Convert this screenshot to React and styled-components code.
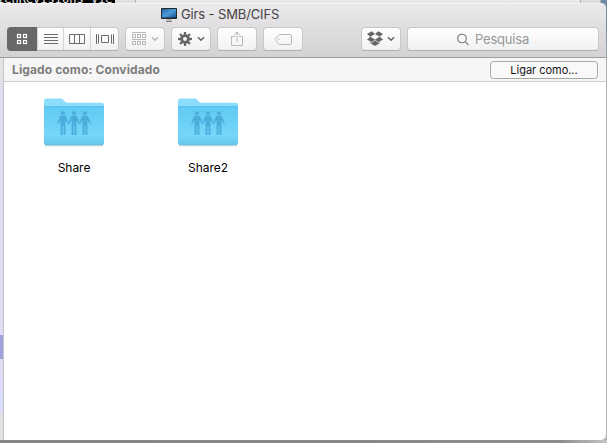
import React from 'react';
import styled, { createGlobalStyle, css } from 'styled-components';

const GlobalStyle = createGlobalStyle`
  * { box-sizing: border-box; }
  body { margin: 0; overflow: hidden; font-family: Inter, "Liberation Sans", sans-serif; }
  svg { display: block; flex: none; }
`;

const Desktop = styled.div`
  width: 607px;
  height: 443px;
  display: flex;
  flex-direction: column;
  overflow: hidden;
  background: linear-gradient(90deg, #858585 0, #8c8c8c 560px, #c4c4c4 606px);
`;
const BackStrip = styled.div`
  display: flex;
  height: 3px;
  background: #e5e5e5;
`;
const TerminalSliver = styled.div`
  width: 115px;
  height: 3px;
  overflow: hidden;
  background: #000;
  color: #e8e8e8;
  font: 12px/8px "DejaVu Sans Mono", monospace;
  white-space: nowrap;
  display: flex;
  align-items: flex-end;
  text-indent: -3px;
`;
const BackPanel = styled.div`
  width: ${(p) => p.$w}px;
  border-right: 1px solid #b5b5b5;
  background: ${(p) => p.$bg};
`;
const BackEdge = styled.div`
  flex: 1;
  background: #6d8aa7;
`;
const Frame = styled.div`
  height: 437px;
  display: flex;
  flex-direction: column;
  background: linear-gradient(180deg, #6d8aa7 0, #7894ac 30px, #b0b0b0 60px, #b5b5b5 100%);
`;
const Header = styled.header`
  width: 606px;
  height: 55px;
  flex: none;
  border-top: 1px solid #f6f5f6;
  border-bottom: 1px solid #9f9b9f;
  border-top-right-radius: 5px;
  background: linear-gradient(180deg, #ebe9eb, #d3d1d3);
`;
const TitleRow = styled.div`
  height: 23px;
  display: flex;
  align-items: center;
  padding: 0 0 2px 161px;
  gap: 3px;
`;
const Title = styled.h1`
  margin: 0;
  font-size: 13px;
  font-weight: 400;
  line-height: 19px;
  letter-spacing: -0.13px;
  color: #454345;
  white-space: nowrap;
`;
const Toolbar = styled.div`
  display: flex;
  height: 24px;
  padding-left: 7px;
`;
const raised = css`
  border: 1px solid #c8c6c8;
  border-bottom-color: #b1afb1;
  border-radius: 4px;
  background: linear-gradient(180deg, #fefefe, #f2f1f2);
`;
const Segmented = styled.div`
  ${raised}
  width: 112px;
  display: flex;
  margin-right: 6px;
`;
const Segment = styled.button`
  width: ${(p) => p.$w}px;
  padding: 0;
  border: 0;
  border-left: ${(p) => (p.$first ? 0 : 1)}px solid #d5d3d5;
  display: flex;
  align-items: center;
  justify-content: center;
  color: #6b6b6b;
  background: transparent;
  ${(p) => p.$active && css`
    color: #fff;
    background: #686868;
    margin: -1px 0 -1px -1px;
    border-radius: 4px 0 0 4px;
  `}
`;
const ToolButton = styled.button`
  ${raised}
  width: 40px;
  padding: 0;
  margin-right: ${(p) => p.$after ?? 6}px;
  display: flex;
  align-items: center;
  justify-content: center;
  gap: ${(p) => p.$gap ?? 5}px;
  color: ${(p) => (p.$dim ? '#b9b9b9' : '#666')};
`;
const Search = styled.div`
  ${raised}
  width: 192px;
  display: flex;
  align-items: center;
  padding-left: 49px;
  gap: 6px;
  font-size: 13px;
  letter-spacing: -0.2px;
  color: #999;
`;
const Body = styled.div`
  flex: 1;
  width: 606px;
  display: flex;
  min-height: 0;
`;
const SideSliver = styled.div`
  width: 4px;
  border-right: 1px solid #c5c3ca;
  background: linear-gradient(
    180deg,
    #e4e4e4 0, #e4e4e4 18px, #dcdcf3 34px, #dcdcf3 277px,
    #a2a2df 277px, #a2a2df 301px, #dcdcf3 301px, #dcdcff 350px,
    #e2e2e2 362px, #e2e2e2 100%
  );
`;
const Content = styled.main`
  flex: 1;
  background: #fff;
  border-bottom-right-radius: 5px;
`;
const StatusBar = styled.div`
  height: 24px;
  display: flex;
  align-items: center;
  justify-content: space-between;
  padding: 0 8px;
  background: #f6f6f6;
  border-bottom: 1px solid #cfcfcf;
`;
const Status = styled.span`
  font-size: 12px;
  font-weight: 700;
  letter-spacing: 0.12px;
  color: #7d7d7d;
`;
const ConnectButton = styled.button`
  width: 108px;
  height: 18px;
  padding: 0;
  border: 1px solid #a6a6a6;
  border-radius: 3.5px;
  background: #f9f9f9;
  font: 11px/14px Inter, sans-serif;
  letter-spacing: -0.03px;
  color: #161616;
`;
const Files = styled.div`
  display: flex;
  padding: 15px 0 0 3px;
`;
const FileItem = styled.figure`
  width: 134px;
  margin: 0;
  display: flex;
  flex-direction: column;
  align-items: center;
`;
const FileName = styled.figcaption`
  margin-top: 9px;
  font-size: 12px;
  line-height: 16px;
  letter-spacing: -0.02px;
  color: #000;
`;

const Chevron = () => (
  <svg width="8" height="6" viewBox="0 0 8 6" fill="none" stroke="currentColor" strokeWidth="1.6">
    <path d="M1 1.2 4 4.2 7 1.2" />
  </svg>
);
const Monitor = () => (
  <svg width="17" height="16" viewBox="0 0 17 16">
    <defs>
      <linearGradient id="screen" x1="0" y1="0" x2="1" y2="1">
        <stop offset="0" stopColor="#2463a0" />
        <stop offset=".5" stopColor="#4c9bdc" />
        <stop offset="1" stopColor="#174f8a" />
      </linearGradient>
    </defs>
    <path d="M6 12h4l1 2.5H5z" fill="#b3b3b3" />
    <path d="M5 14.5h6" stroke="#858585" />
    <rect x="0" y="1" width="16" height="11" rx=".8" fill="#222a31" />
    <rect x="1" y="2" width="14" height="8.5" fill="url(#screen)" />
  </svg>
);
const IconGrid = () => (
  <svg width="12" height="12" viewBox="0 0 12 12" fill="none" stroke="currentColor" strokeWidth="1.2">
    {[[1.5, 1.5], [7.5, 1.5], [1.5, 7.5], [7.5, 7.5]].map(([x, y]) => (
      <rect key={`${x}-${y}`} x={x} y={y} width="3" height="3" />
    ))}
  </svg>
);
const IconList = () => (
  <svg width="14" height="12" viewBox="0 0 14 12" stroke="currentColor">
    <path d="M0 1.5h14M0 4.5h14M0 7.5h14M0 10.5h14" />
  </svg>
);
const IconColumns = () => (
  <svg width="16" height="12" viewBox="0 0 16 12" fill="none" stroke="currentColor">
    <path d="M.5 1.5h15v9H.5zM5.5 1.5v9M10.5 1.5v9" />
  </svg>
);
const IconFlow = () => (
  <svg width="18" height="12" viewBox="0 0 18 12" fill="none" stroke="currentColor">
    <path d="M5.5 2.5h7v7h-7zM.5 1v10M17.5 1v10M2.5 1.5v9M15.5 1.5v9" />
  </svg>
);
const IconArrange = () => (
  <svg width="14" height="14" viewBox="0 0 14 14" fill="none" stroke="currentColor">
    <path d="M0 .5h14M0 7.5h14" />
    {[2.5, 9.5].map((y) => [0.5, 5.5, 10.5].map((x) => (
      <rect key={`${x}-${y}`} x={x} y={y} width="3" height="3" />
    )))}
  </svg>
);
const IconGear = () => (
  <svg width="14" height="14" viewBox="0 0 14 14" fill="none" stroke="currentColor">
    <circle cx="7" cy="7" r="3.4" strokeWidth="2.8" />
    {[0, 45, 90, 135, 180, 225, 270, 315].map((a) => (
      <path key={a} d="M7 0v3" strokeWidth="2.2" transform={`rotate(${a} 7 7)`} />
    ))}
  </svg>
);
const IconShare = () => (
  <svg width="12" height="16" viewBox="0 0 12 16" fill="none" stroke="currentColor">
    <path d="M4 5.5H.5v9h11v-9H8M6 10.5V1M3.2 3.8 6 1l2.8 2.8" />
  </svg>
);
const IconTag = () => (
  <svg width="17" height="11" viewBox="0 0 17 11" fill="none" stroke="currentColor">
    <path d="M5 .5h10q1.5 0 1.5 1.5v7q0 1.5-1.5 1.5H5Q4.2 10.5 3.5 9.8L.8 6.6Q.2 5.5.8 4.4L3.5 1.2Q4.2.5 5 .5z" />
    <circle cx="3.7" cy="5.5" r=".4" />
  </svg>
);
const IconDropbox = () => (
  <svg width="16" height="16" viewBox="0 0 16 16" fill="currentColor">
    <path d="M4.7.3 8 2.9 3.3 5.7 0 3.1zM11.3.3 16 3.1l-3.3 2.6L8 2.9zM0 8.4l3.300-2.600L8 8.600l-3.300 2.700zM16 8.400l-3.300-2.600L8 8.600l3.300 2.700zM8 9.300l3.300 2.700 1.400-.9v1.200L8 14.900l-4.700-2.600v-1.200l1.400.9z" />
  </svg>
);
const IconSearch = () => (
  <svg width="12" height="13" viewBox="0 0 12 13" fill="none" stroke="#777" strokeWidth="1.1">
    <circle cx="5" cy="5.5" r="4.3" />
    <path d="m8.200 8.700 3.300 3.500" />
  </svg>
);
const SharedFolder = () => (
  <svg width="62" height="54" viewBox="0 0 62 54">
    <defs>
      <linearGradient id="folder" x1="0" y1="0" x2="0" y2="1">
        <stop offset="0" stopColor="#60c9f3" />
        <stop offset=".75" stopColor="#76d6f9" />
        <stop offset="1" stopColor="#6bcdf1" />
      </linearGradient>
    </defs>
    <path d="M2 48.800h58" stroke="#c9d0d3" />
    <path d="M1 4q0-2.500 2.500-2.500h14q1.500 0 2.500 1l2 2.200q1 1 2.500 1H58.500Q61 5.700 61 8v10H1z" fill="#8cdcfb" />
    <path d="M1 10q0-1 1-1h58q1 0 1 1v36q0 2-2 2H3q-2 0-2-2z" fill="url(#folder)" />
    <path d="M1 9.500h60" stroke="#57bce5" strokeOpacity=".6" />
    <path d="M1 42.500h60M1 44.500h60M1 46.500h60" stroke="#50b7de" strokeOpacity=".35" strokeWidth=".8" />
    <path d="M2 47.800h58" stroke="#55b4d7" strokeWidth=".7" />
    {[20, 31, 42].map((x) => (
      <g key={x} transform={`translate(${x} 14)`} fill="#48addb">
        <circle cx="0" cy="2.200" r="2" />
        <path d="M-1.800 4.800h3.600Q2.900 4.800 3.300 6L5.900 12.500l-.8.800L2.400 9V24H.5V15h-1v9h-1.900V9L-5.100 13.300l-.8-.8L-3.300 6Q-2.900 4.800-1.800 4.800z" />
      </g>
    ))}
  </svg>
);

const views = [
  { id: 'icons', w: 30, Icon: IconGrid },
  { id: 'list', w: 26, Icon: IconList },
  { id: 'columns', w: 27, Icon: IconColumns },
  { id: 'flow', w: 28, Icon: IconFlow },
];

export default function App() {
  return (
    <Desktop>
      <GlobalStyle />
      <BackStrip>
        <TerminalSliver>ienRevisions Vie</TerminalSliver>
        <BackPanel $w={21} $bg="#e0e0e0" />
        <BackPanel $w={445} $bg="#e7e7e7" />
        <BackPanel $w={20} $bg="#dcdcdc" />
        <BackEdge />
      </BackStrip>
      <Frame>
        <Header>
          <TitleRow>
            <Monitor />
            <Title>Girs - SMB/CIFS</Title>
          </TitleRow>
          <Toolbar>
            <Segmented>
              {views.map(({ id, w, Icon }, i) => (
                <Segment key={id} $w={w} $first={i === 0} $active={id === 'icons'} aria-label={id}><Icon /></Segment>
              ))}
            </Segmented>
            <ToolButton $dim aria-label="arrange"><IconArrange /><Chevron /></ToolButton>
            <ToolButton aria-label="actions"><IconGear /><Chevron /></ToolButton>
            <ToolButton $dim aria-label="share"><IconShare /></ToolButton>
            <ToolButton $dim $after={58} aria-label="tags"><IconTag /></ToolButton>
            <ToolButton $gap={4} aria-label="dropbox"><IconDropbox /><Chevron /></ToolButton>
            <Search><IconSearch />Pesquisa</Search>
          </Toolbar>
        </Header>
        <Body>
          <SideSliver />
          <Content>
            <StatusBar>
              <Status>Ligado como: Convidado</Status>
              <ConnectButton>Ligar como...</ConnectButton>
            </StatusBar>
            <Files>
              {['Share', 'Share2'].map((name) => (
                <FileItem key={name}>
                  <SharedFolder />
                  <FileName>{name}</FileName>
                </FileItem>
              ))}
            </Files>
          </Content>
        </Body>
      </Frame>
    </Desktop>
  );
}
